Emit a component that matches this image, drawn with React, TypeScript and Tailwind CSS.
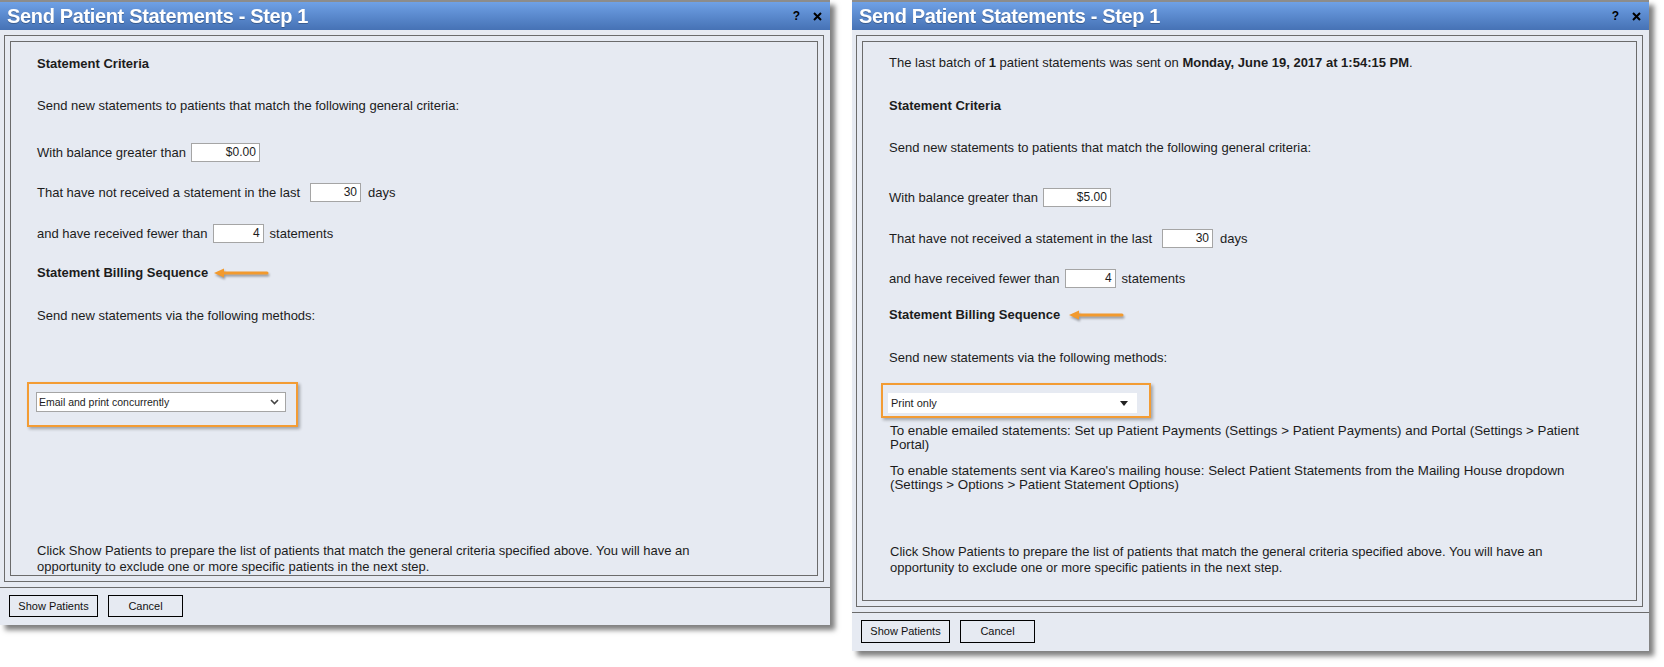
import type { ReactNode } from "react";

const FONT = "font-['Liberation_Sans',Arial,sans-serif]";

function Arrow() {
  return (
    <svg width="56" height="12" viewBox="0 0 56 12" className="drop-shadow-[1px_2px_1px_rgba(0,0,0,0.35)]">
      <path d="M10 6H54" stroke="#f29a2e" strokeWidth="3" strokeLinecap="round" />
      <path d="M1 6L11 1.5V10.5Z" fill="#f29a2e" />
    </svg>
  );
}

function Field({ value, width }: { value: string; width: string }) {
  return (
    <div
      className={`${width} h-[19px] bg-white border border-[#a5a5a5] text-right pr-[3px] text-[12px] leading-[17px] text-[#1c1c1c]`}
    >
      {value}
    </div>
  );
}

function TitleBar({ title }: { title: string }) {
  return (
    <div className="h-[30px] border-t-2 border-[#8c8c8c] bg-gradient-to-b from-[#6fa1e6] to-[#4672b5] flex items-center pl-[7px] pr-[8px]">
      <span className="flex-1 text-white font-bold text-[20px] tracking-[-0.35px] leading-none drop-shadow-[0_1px_0_rgba(0,0,0,0.25)]">
        {title}
      </span>
      <span className="text-black font-bold text-[12px] leading-none mr-[13px]">?</span>
      <svg width="9" height="9" viewBox="0 0 9 9">
        <path d="M1 1L8 8M8 1L1 8" stroke="#000" strokeWidth="2" />
      </svg>
    </div>
  );
}

function Window({
  width,
  frameHeight,
  buttonHeight,
  children,
}: {
  width: string;
  frameHeight: string;
  buttonHeight: string;
  children: ReactNode;
}) {
  return (
    <div className={`${width} bg-[#e6eaf2] shadow-[5px_5px_5px_rgba(0,0,0,0.5)] flex flex-col`}>
      <TitleBar title="Send Patient Statements - Step 1" />
      <div className="pt-[5px] pl-[4px] pr-[6px]">
        <div className="border border-[#6b6b6b] p-[5px]">
          <div className={`${frameHeight} border border-[#6b6b6b] flex flex-col pl-[26px]`}>{children}</div>
        </div>
      </div>
      <div className="mt-[5px] border-t border-[#6b6b6b] flex gap-[10px] pt-[7px] pb-[8px] pl-[9px]">
        <button className={`w-[89px] ${buttonHeight} border border-black text-[11px] text-[#111] bg-[#e6eaf2]`}>
          Show Patients
        </button>
        <button className={`w-[75px] ${buttonHeight} border border-black text-[11px] text-[#111] bg-[#e6eaf2]`}>
          Cancel
        </button>
      </div>
    </div>
  );
}

export default function App() {
  return (
    <div className={`${FONT} bg-white w-[1664px] h-[667px] flex items-start gap-[22px] text-[#1c1c1c]`}>
      {/* Step 1 - first batch */}
      <Window width="w-[830px]" frameHeight="h-[535px]" buttonHeight="h-[22px]">
        <div className="text-[13px] leading-[16px] flex flex-col flex-1">
          <div className="mt-[14px] font-bold">Statement Criteria</div>
          <div className="mt-[26px]">Send new statements to patients that match the following general criteria:</div>
          <div className="mt-[29px] flex items-center gap-[5px]">
            <span>With balance greater than</span>
            <Field value="$0.00" width="w-[69px]" />
          </div>
          <div className="mt-[21px] flex items-center gap-[5px]">
            <span className="mr-[5px]">That have not received a statement in the last</span>
            <Field value="30" width="w-[51px]" />
            <span className="ml-[2px]">days</span>
          </div>
          <div className="mt-[22px] flex items-center gap-[5px]">
            <span>and have received fewer than</span>
            <Field value="4" width="w-[51px]" />
            <span className="ml-[1px]">statements</span>
          </div>
          <div className="mt-[22px] flex items-center h-[16px]">
            <span className="font-bold">Statement Billing Sequence</span>
            <span className="ml-[5px] flex"><Arrow /></span>
          </div>
          <div className="mt-[27px]">Send new statements via the following methods:</div>
          <div className="mt-[58px] -ml-[10px] w-[271px] h-[45px] border-2 border-[#f39c34] shadow-[2px_2px_3px_rgba(0,0,0,0.3)] pl-[7px] pt-[8px]">
            <div className="w-[250px] h-[20px] bg-white border border-[#a5a5a5] flex items-center pl-[2px] pr-[6px]">
              <span className="flex-1 text-[10.5px] leading-none">Email and print concurrently</span>
              <svg width="9" height="6" viewBox="0 0 9 6">
                <path d="M1 1L4.5 4.5L8 1" stroke="#444" strokeWidth="1.6" fill="none" />
              </svg>
            </div>
          </div>
          <div className="mt-auto">
            Click Show Patients to prepare the list of patients that match the general criteria specified above. You will have an
            <br />
            opportunity to exclude one or more specific patients in the next step.
          </div>
        </div>
      </Window>

      {/* Step 1 - after a previous batch */}
      <Window width="w-[797px]" frameHeight="h-[560px]" buttonHeight="h-[23px]">
        <div className="text-[13px] leading-[16px] flex flex-col flex-1">
          <div className="mt-[13px]">
            The last batch of <b>1</b> patient statements was sent on <b>Monday, June 19, 2017 at 1:54:15 PM</b>.
          </div>
          <div className="mt-[27px] font-bold">Statement Criteria</div>
          <div className="mt-[26px]">Send new statements to patients that match the following general criteria:</div>
          <div className="mt-[32px] flex items-center gap-[5px]">
            <span>With balance greater than</span>
            <Field value="$5.00" width="w-[68px]" />
          </div>
          <div className="mt-[22px] flex items-center gap-[5px]">
            <span className="mr-[5px]">That have not received a statement in the last</span>
            <Field value="30" width="w-[51px]" />
            <span className="ml-[2px]">days</span>
          </div>
          <div className="mt-[21px] flex items-center gap-[5px]">
            <span>and have received fewer than</span>
            <Field value="4" width="w-[51px]" />
            <span className="ml-[1px]">statements</span>
          </div>
          <div className="mt-[19px] flex items-center h-[16px]">
            <span className="font-bold">Statement Billing Sequence</span>
            <span className="ml-[8px] flex"><Arrow /></span>
          </div>
          <div className="mt-[27px]">Send new statements via the following methods:</div>
          <div className="mt-[17px] -ml-[8px] w-[270px] h-[35px] border-2 border-[#f39c34] shadow-[2px_2px_3px_rgba(0,0,0,0.3)] pl-[5px] pt-[8px]">
            <div className="w-[249px] h-[20px] bg-white flex items-center pl-[3px] pr-[9px]">
              <span className="flex-1 text-[11px] leading-none">Print only</span>
              <svg width="8" height="5" viewBox="0 0 8 5">
                <path d="M0 0H8L4 5Z" fill="#222" />
              </svg>
            </div>
          </div>
          <div className="mt-[6px] text-[13.33px] leading-[14px] pl-[1px]">
            To enable emailed statements: Set up Patient Payments (Settings &gt; Patient Payments) and Portal (Settings &gt; Patient
            <br />
            Portal)
          </div>
          <div className="mt-[12px] text-[13.33px] leading-[14px] pl-[1px]">
            To enable statements sent via Kareo&apos;s mailing house: Select Patient Statements from the Mailing House dropdown
            <br />
            (Settings &gt; Options &gt; Patient Statement Options)
          </div>
          <div className="mt-auto mb-[24px] pl-[1px]">
            Click Show Patients to prepare the list of patients that match the general criteria specified above. You will have an
            <br />
            opportunity to exclude one or more specific patients in the next step.
          </div>
        </div>
      </Window>
    </div>
  );
}
